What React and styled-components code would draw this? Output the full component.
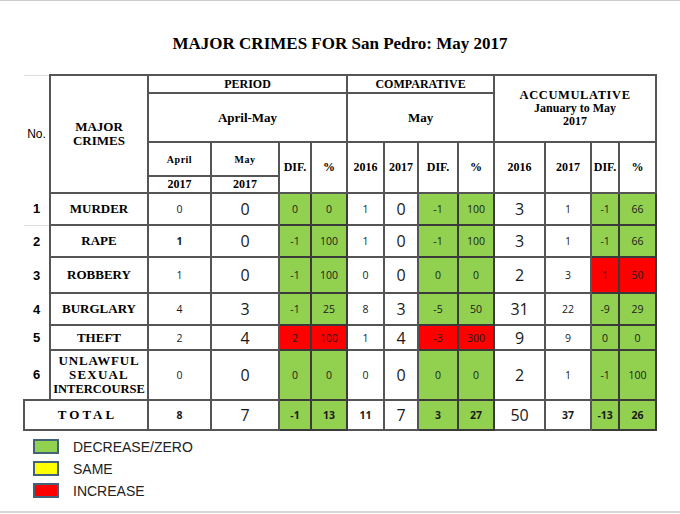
import React from 'react';
import styled, { createGlobalStyle, css } from 'styled-components';

// plain values, no theme provider
const C = {
  green: '#92d050',
  yellow: '#ffff00',
  red: '#ff0000',
  line: '#555555',
  faint: '#dcdcdc',
  legendEdge: '#44617b',
};

const GlobalStyle = createGlobalStyle`
  html, body { margin: 0; padding: 0; background: #fff; }
  body { font-family: 'Liberation Serif', 'Times New Roman', serif; color: #000; }
`;

const Page = styled.div`
  width: 680px;
  height: 513px;
  box-sizing: border-box;
  border-top: 1px solid #cccccc;
  border-bottom: 2px solid #d6d6d6;
  overflow: hidden;
`;

const Title = styled.h1`
  margin: 34px 0 0;
  font-size: 17px;
  line-height: 18px;
  font-weight: bold;
  text-align: center;
`;

const Table = styled.table`
  margin: 21px 0 0 23px;
  width: 633px;
  table-layout: fixed;
  border-collapse: collapse;
  font-family: 'Liberation Serif', 'Times New Roman', serif;
`;

const Row = styled.tr`
  height: ${({ $h }) => $h}px;
`;

const cellBase = css`
  padding: 0;
  border: 2px solid ${C.line};
  text-align: center;
  vertical-align: middle;
  overflow: hidden;
  white-space: nowrap;
`;

const NoHead = styled.th`
  ${cellBase}
  border: none;
  border-top: 1px solid ${C.faint};
  font-family: 'Liberation Sans', Arial, sans-serif;
  font-weight: normal;
  font-size: 12px;
`;

const Head = styled.th`
  ${cellBase}
  font-weight: bold;
  font-size: ${({ $size }) => $size || 13}px;
  line-height: ${({ $lh }) => ($lh ? `${$lh}px` : 'normal')};
  letter-spacing: ${({ $ls }) => $ls || 0}px;
`;

const NoCell = styled.td`
  ${cellBase}
  border: none;
  border-bottom: ${({ $faint }) => ($faint ? `1px solid ${C.faint}` : 'none')};
  font-family: 'Liberation Sans', Arial, sans-serif;
  font-weight: bold;
  font-size: 13px;
`;

const CrimeCell = styled.td`
  ${cellBase}
  font-weight: bold;
  font-size: 13px;
  line-height: 14px;
`;

const NameLine = styled.span`
  display: block;
  letter-spacing: ${({ $ls }) => $ls || 0}px;
  font-size: ${({ $size }) => $size || 13}px;
`;

const ValueCell = styled.td`
  ${cellBase}
  font-family: 'Open Sans', 'Liberation Sans', sans-serif;
  color: #1a1a1a;
  font-size: ${({ $big }) => ($big ? 16 : 10.5)}px;
  font-weight: ${({ $bold }) => ($bold ? 700 : 400)};
  background: ${({ $bg }) => $bg || 'transparent'};
  border-color: ${({ $bg }) => ($bg ? '#3a3a3a' : C.line)};
`;

const TotalLabel = styled.td`
  ${cellBase}
  font-weight: bold;
  font-size: 13px;
  letter-spacing: 3px;
  text-indent: 3px;
`;

const Legend = styled.div`
  display: flex;
  flex-direction: column;
  gap: 7px;
  margin: 8px 0 0 33px;
`;

const LegendItem = styled.div`
  display: flex;
  align-items: center;
  gap: 14px;
  height: 15px;
  font-family: 'Liberation Sans', Arial, sans-serif;
  font-size: 14px;
  color: #222;
`;

const Swatch = styled.span`
  width: 22px;
  height: 11px;
  border: 2px solid ${C.legendEdge};
  background: ${({ $color }) => $color};
`;

const widths = [26, 98, 63, 68, 32, 36, 37, 34, 40, 36, 51, 46, 28, 37];

// column kinds: s = small number, b = big number, f = flagged (coloured) cell
const kinds = ['s', 'b', 'f', 'f', 's', 'b', 'f', 'f', 'b', 's', 'f', 'f'];

const rows = [
  { no: '1', name: ['MURDER'], h: 32, faint: true, v: ['0', '0', '0', '0', '1', '0', '-1', '100', '3', '1', '-1', '66'] },
  { no: '2', name: ['RAPE'], h: 32, v: ['1', '0', '-1', '100', '1', '0', '-1', '100', '3', '1', '-1', '66'], bold: [0] },
  { no: '3', name: ['ROBBERY'], h: 36, v: ['1', '0', '-1', '100', '0', '0', '0', '0', '2', '3', '1', '50'], red: [10, 11] },
  { no: '4', name: ['BURGLARY'], h: 32, v: ['4', '3', '-1', '25', '8', '3', '-5', '50', '31', '22', '-9', '29'] },
  { no: '5', name: ['THEFT'], h: 25, v: ['2', '4', '2', '100', '1', '4', '-3', '300', '9', '9', '0', '0'], red: [2, 3, 6, 7] },
  {
    no: '6',
    name: [
      { text: 'UNLAWFUL', ls: 0.8 },
      { text: 'SEXUAL', ls: 1.2 },
      { text: 'INTERCOURSE', ls: 0, size: 12.5 },
    ],
    h: 50,
    v: ['0', '0', '0', '0', '0', '0', '0', '0', '2', '1', '-1', '100'],
  },
];

const totals = ['8', '7', '-1', '13', '11', '7', '3', '27', '50', '37', '-13', '26'];

const Values = ({ values, red = [], bold = [], allBold }) =>
  values.map((val, i) => {
    const kind = kinds[i];
    const bg = kind === 'f' ? (red.includes(i) ? C.red : C.green) : undefined;
    return (
      <ValueCell key={i} $big={kind === 'b'} $bold={allBold && kind !== 'b' ? true : bold.includes(i)} $bg={bg}>
        {val}
      </ValueCell>
    );
  });

export default function App() {
  return (
    <>
      <GlobalStyle />
      <Page>
        <Title>MAJOR CRIMES FOR San Pedro: May 2017</Title>
        <Table>
          <colgroup>
            {widths.map((w, i) => (
              <col key={i} style={{ width: w }} />
            ))}
          </colgroup>
          <thead>
            <Row $h={18}>
              <NoHead rowSpan={4}>No.</NoHead>
              <Head rowSpan={4} $lh={14}>
                MAJOR
                <br />
                CRIMES
              </Head>
              <Head colSpan={4} $size={12}>PERIOD</Head>
              <Head colSpan={4} $size={12}>COMPARATIVE</Head>
              <Head colSpan={4} rowSpan={2} $size={12} $lh={13}>
                <NameLine $ls={0.6} $size={12.5}>ACCUMULATIVE</NameLine>
                <NameLine $size={12}>January to May</NameLine>
                <NameLine $size={12}>2017</NameLine>
              </Head>
            </Row>
            <Row $h={49}>
              <Head colSpan={4} $size={13}>April-May</Head>
              <Head colSpan={4} $size={13}>May</Head>
            </Row>
            <Row $h={34}>
              <Head $size={10} $ls={0.5}>April</Head>
              <Head $size={10} $ls={0.5}>May</Head>
              <Head rowSpan={2} $size={12}>DIF.</Head>
              <Head rowSpan={2} $size={12}>%</Head>
              <Head rowSpan={2} $size={12}>2016</Head>
              <Head rowSpan={2} $size={12}>2017</Head>
              <Head rowSpan={2} $size={12}>DIF.</Head>
              <Head rowSpan={2} $size={12}>%</Head>
              <Head rowSpan={2} $size={12}>2016</Head>
              <Head rowSpan={2} $size={12}>2017</Head>
              <Head rowSpan={2} $size={12}>DIF.</Head>
              <Head rowSpan={2} $size={12}>%</Head>
            </Row>
            <Row $h={17}>
              <Head $size={12}>2017</Head>
              <Head $size={12}>2017</Head>
            </Row>
          </thead>
          <tbody>
            {rows.map((r) => (
              <Row key={r.no} $h={r.h}>
                <NoCell $faint={r.faint}>{r.no}</NoCell>
                <CrimeCell>
                  {r.name.map((line) =>
                    typeof line === 'string' ? (
                      <NameLine key={line}>{line}</NameLine>
                    ) : (
                      <NameLine key={line.text} $ls={line.ls} $size={line.size}>
                        {line.text}
                      </NameLine>
                    )
                  )}
                </CrimeCell>
                <Values values={r.v} red={r.red} bold={r.bold} />
              </Row>
            ))}
            <Row $h={30}>
              <TotalLabel colSpan={2}>TOTAL</TotalLabel>
              <Values values={totals} allBold />
            </Row>
          </tbody>
        </Table>
        <Legend>
          <LegendItem>
            <Swatch $color={C.green} />
            DECREASE/ZERO
          </LegendItem>
          <LegendItem>
            <Swatch $color={C.yellow} />
            SAME
          </LegendItem>
          <LegendItem>
            <Swatch $color={C.red} />
            INCREASE
          </LegendItem>
        </Legend>
      </Page>
    </>
  );
}
